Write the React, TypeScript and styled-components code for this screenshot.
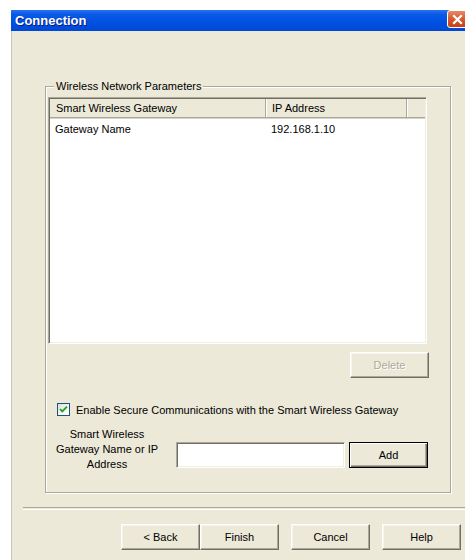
import React from "react";
import styled, { createGlobalStyle } from "styled-components";

const Global = createGlobalStyle`
  html, body { margin: 0; padding: 0; background: #ffffff; overflow: hidden; }
  body { font-family: "Liberation Sans", Arial, sans-serif; font-size: 11px; color: #000; }
`;

const Window = styled.div`
  margin: 10px 0 0 11px;
  width: 458px;
  height: 550px;
  display: flex;
  flex-direction: column;
`;

const TitleBar = styled.div`
  height: 21px;
  display: flex;
  align-items: flex-start;
  background: linear-gradient(180deg, #2a72f0 0%, #0a5ae8 20%, #0050e0 60%, #0048d4 100%);
`;

const Title = styled.div`
  flex: 1;
  padding: 3px 0 0 4px;
  font-family: "Liberation Sans", Arial, sans-serif;
  font-weight: bold;
  font-size: 13px;
  line-height: 15px;
  color: #ffffff;
  text-shadow: 1px 1px 0 #0a1a80;
`;

const CloseButton = styled.div`
  width: 21px;
  height: 18px;
  margin-right: 1px;
  box-sizing: border-box;
  border: 1px solid #ffffff;
  border-radius: 3px;
  background: linear-gradient(180deg, #e88a68 0%, #d8582f 50%, #c2401a 100%);
  display: flex;
  align-items: center;
  justify-content: center;
`;

const Body = styled.div`
  flex: 1;
  background: #ece9d8;
  border-left: 1px solid #c9c6b6;
  display: flex;
  flex-direction: column;
`;

const GroupBox = styled.div`
  position: relative;
  margin: 55px 0 0 33px;
  width: 406px;
  height: 407px;
  box-sizing: border-box;
  border: 1px solid #aca899;
  box-shadow: inset 1px 1px 0 #ffffff, 1px 1px 0 #ffffff;
  padding: 10px 0 0 2px;
  display: flex;
  flex-direction: column;
`;

const Legend = styled.span`
  position: absolute;
  top: -7px;
  left: 8px;
  padding: 0 2px;
  background: #ece9d8;
  line-height: 13px;
`;

const ListColumn = styled.div`
  width: 381px;
  display: flex;
  flex-direction: column;
`;

const ListView = styled.div`
  width: 379px;
  height: 247px;
  box-sizing: border-box;
  background: #ffffff;
  border-top: 1px solid #aca899;
  border-left: 1px solid #aca899;
  border-right: 1px solid #ffffff;
  border-bottom: 1px solid #ffffff;
  box-shadow: inset 1px 1px 0 #716f64, inset -1px -1px 0 #f1efe2;
  padding: 1px;
  display: flex;
  flex-direction: column;
`;

const HeaderRow = styled.div`
  display: flex;
  height: 18px;
  background: #ece9d8;
  border-bottom: 1px solid #aca899;
  box-shadow: 0 1px 0 #d6d3c4;
`;

const HeaderCell = styled.div<{ $w?: number }>`
  ${(p) => (p.$w ? `width: ${p.$w}px;` : "flex: 1;")}
  box-sizing: border-box;
  padding-left: 6px;
  display: flex;
  align-items: center;
  border-right: ${(p) => (p.$w ? "1px solid #aca899" : "none")};
  box-shadow: ${(p) => (p.$w ? "1px 0 0 #ffffff" : "none")};
  white-space: nowrap;
`;

const DataRow = styled.div`
  display: flex;
  height: 18px;
  margin-top: 2px;
`;

const DataCell = styled.div<{ $w?: number }>`
  ${(p) => (p.$w ? `width: ${p.$w}px;` : "flex: 1;")}
  box-sizing: border-box;
  padding-left: 5px;
  display: flex;
  align-items: center;
  white-space: nowrap;
`;

const RightRow = styled.div`
  display: flex;
  justify-content: flex-end;
  margin-top: 8px;
`;

const Button = styled.button<{ $default?: boolean }>`
  width: 79px;
  height: 26px;
  box-sizing: border-box;
  margin: 0;
  padding: 0;
  font-family: "Liberation Sans", Arial, sans-serif;
  font-size: 11px;
  color: ${(p) => (p.disabled ? "#aca899" : "#000000")};
  text-shadow: ${(p) => (p.disabled ? "1px 1px 0 #ffffff" : "none")};
  background: #ece9d8;
  border-style: solid;
  border-width: 1px;
  border-color: ${(p) =>
    p.$default ? "#000000" : "#ffffff #716f64 #716f64 #ffffff"};
  box-shadow: ${(p) =>
    p.$default
      ? "inset 1px 1px 0 #ffffff, inset -1px -1px 0 #716f64, inset -2px -2px 0 #aca899"
      : "inset -1px -1px 0 #aca899, inset 1px 1px 0 #f5f4ee"};
`;

const CheckRow = styled.label`
  display: flex;
  align-items: center;
  gap: 6px;
  margin: 25px 0 0 9px;
  height: 13px;
  white-space: nowrap;
`;

const CheckBox = styled.span`
  width: 13px;
  height: 13px;
  box-sizing: border-box;
  border: 1px solid #1c5180;
  background: linear-gradient(135deg, #dcdcd7 0%, #f8f8f5 60%, #ffffff 100%);
  display: flex;
  align-items: center;
  justify-content: center;
`;

const NameRow = styled.div`
  display: flex;
  align-items: flex-start;
  margin-top: 11px;
`;

const NameLabel = styled.div`
  width: 118px;
  text-align: center;
  line-height: 15px;
`;

const TextInput = styled.input`
  width: 169px;
  height: 26px;
  box-sizing: border-box;
  margin: 15px 0 0 10px;
  padding: 0 4px;
  font-family: "Liberation Sans", Arial, sans-serif;
  font-size: 11px;
  background: #ffffff;
  border-style: solid;
  border-width: 1px;
  border-color: #aca899 #ffffff #ffffff #aca899;
  box-shadow: inset 1px 1px 0 #716f64, inset -1px -1px 0 #f1efe2;
  outline: none;
`;

const AddWrap = styled.div`
  margin: 15px 0 0 4px;
`;

const Separator = styled.div`
  margin: 14px 0 0 11px;
  height: 1px;
  border-top: 1px solid #aca899;
  border-bottom: 1px solid #ffffff;
`;

const ButtonBar = styled.div`
  display: flex;
  margin: 14px 0 0 109px;
`;

const Gap = styled.div`
  width: 12px;
`;

export default function App() {
  return (
    <>
      <Global />
      <Window>
        <TitleBar>
          <Title>Connection</Title>
          <CloseButton>
            <svg width="11" height="11" viewBox="0 0 11 11">
              <path d="M2 2 L9 9 M9 2 L2 9" stroke="#ffffff" strokeWidth="2.2" strokeLinecap="square" />
            </svg>
          </CloseButton>
        </TitleBar>
        <Body>
          <GroupBox>
            <Legend>Wireless Network Parameters</Legend>
            <ListColumn>
              <ListView>
                <HeaderRow>
                  <HeaderCell $w={216}>Smart Wireless Gateway</HeaderCell>
                  <HeaderCell $w={141}>IP Address</HeaderCell>
                  <HeaderCell />
                </HeaderRow>
                <DataRow>
                  <DataCell $w={216}>Gateway Name</DataCell>
                  <DataCell>192.168.1.10</DataCell>
                </DataRow>
              </ListView>
              <RightRow>
                <Button disabled>Delete</Button>
              </RightRow>
            </ListColumn>
            <CheckRow>
              <CheckBox>
                <svg width="9" height="9" viewBox="0 0 9 9">
                  <path d="M1 4 L3.3 6.4 L8 1.6" fill="none" stroke="#21a121" strokeWidth="1.8" />
                </svg>
              </CheckBox>
              Enable Secure Communications with the Smart Wireless Gateway
            </CheckRow>
            <NameRow>
              <NameLabel>
                Smart Wireless
                <br />
                Gateway Name or IP
                <br />
                Address
              </NameLabel>
              <TextInput type="text" defaultValue="" />
              <AddWrap>
                <Button $default>Add</Button>
              </AddWrap>
            </NameRow>
          </GroupBox>
          <Separator />
          <ButtonBar>
            <Button>&lt; Back</Button>
            <Button>Finish</Button>
            <Gap />
            <Button>Cancel</Button>
            <Gap />
            <Button>Help</Button>
          </ButtonBar>
        </Body>
      </Window>
    </>
  );
}
